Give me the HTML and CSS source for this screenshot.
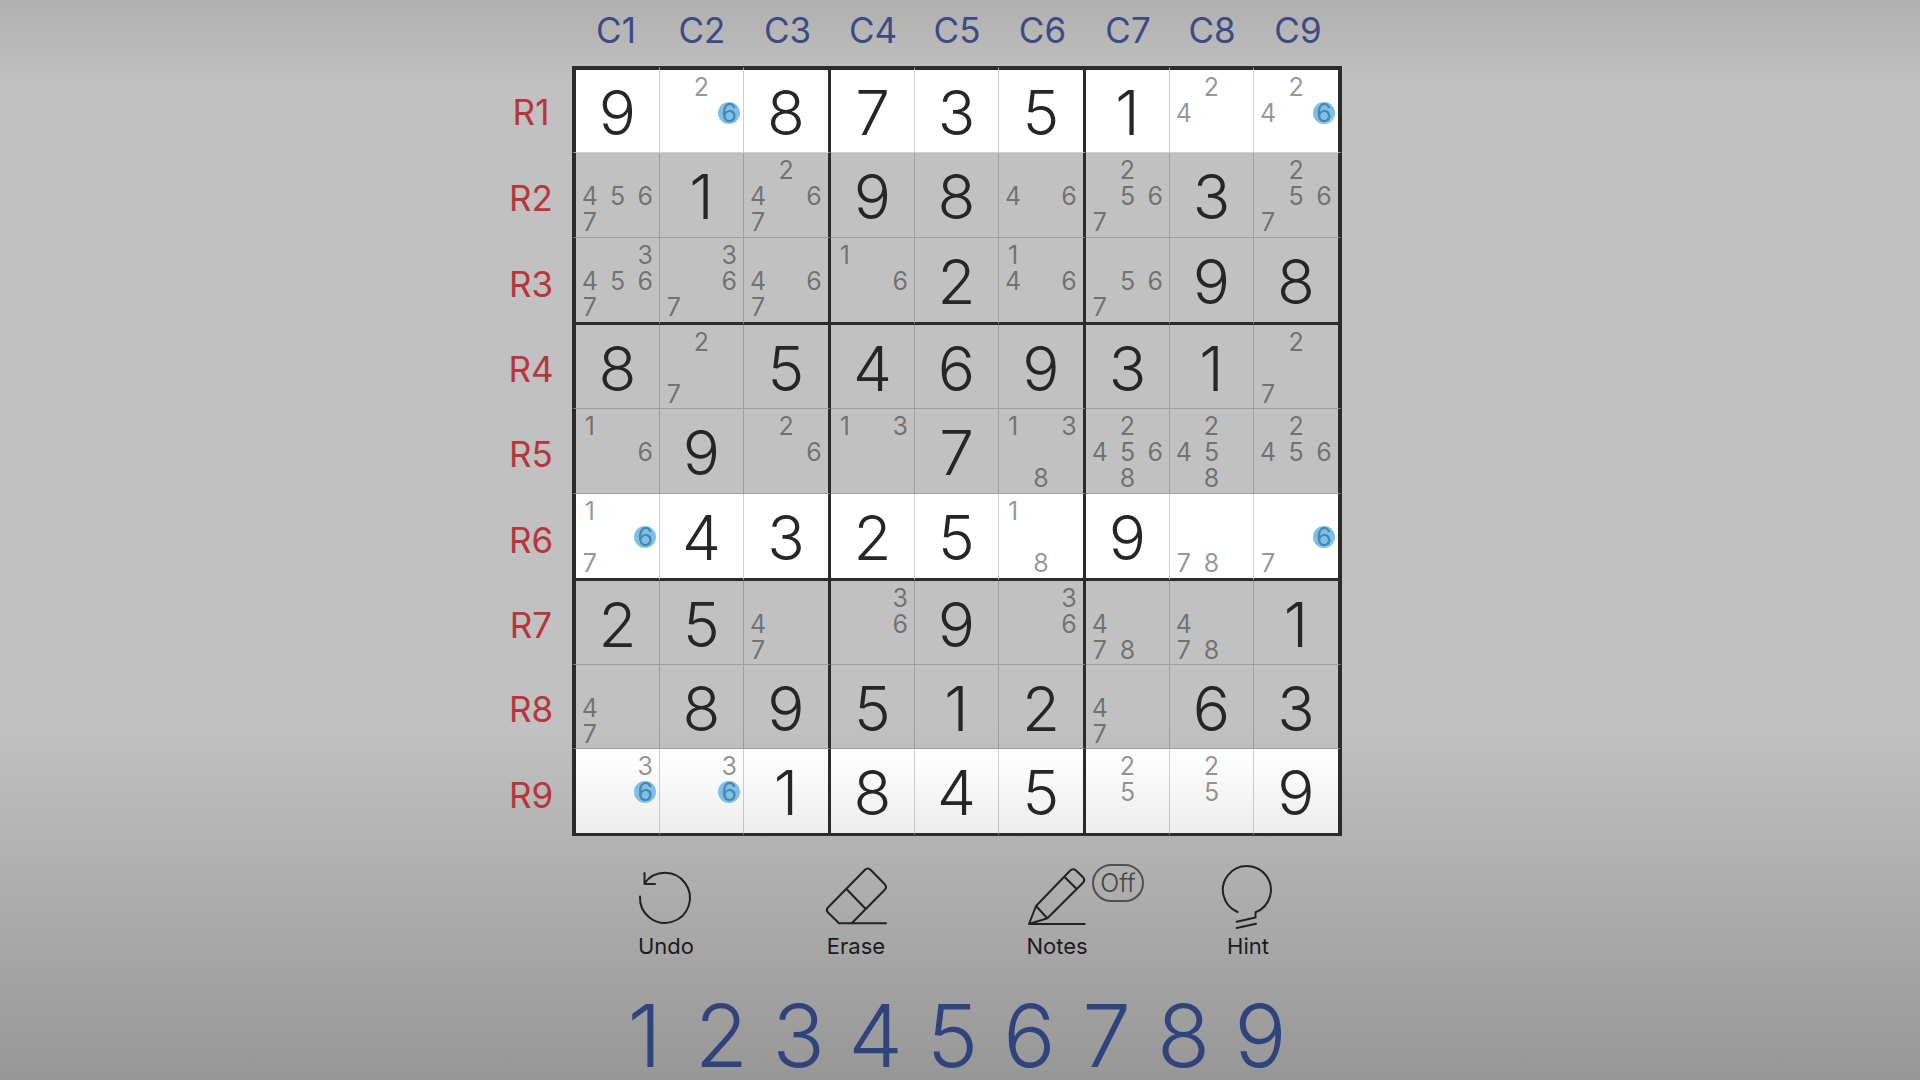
FILE: index.html
```html
<!DOCTYPE html>
<html lang="en">
<head>
<meta charset="utf-8">
<title>Sudoku</title>
<meta name="viewport" content="width=device-width, initial-scale=1">
<link rel="stylesheet" href="styles.css">
</head>
<body>
<main class="game">
<table class="board">
<colgroup><col class="col-label"><col class="col-edge"><col><col class="col-box"><col><col><col class="col-box"><col><col><col class="col-edge"></colgroup>
<thead>
<tr><td class="corner"></td><th scope="col">C1</th><th scope="col">C2</th><th scope="col">C3</th><th scope="col">C4</th><th scope="col">C5</th><th scope="col">C6</th><th scope="col">C7</th><th scope="col">C8</th><th scope="col">C9</th></tr>
</thead>
<tbody>
<tr class="lit first">
<th scope="row">R1</th>
<td>9</td>
<td><div class="notes"><span class="n2">2</span><span class="n6 mark">6</span></div></td>
<td>8</td>
<td>7</td>
<td>3</td>
<td>5</td>
<td>1</td>
<td><div class="notes"><span class="n2">2</span><span class="n4">4</span></div></td>
<td><div class="notes"><span class="n2">2</span><span class="n4">4</span><span class="n6 mark">6</span></div></td>
</tr>
<tr class="tall">
<th scope="row">R2</th>
<td><div class="notes"><span class="n4">4</span><span class="n5">5</span><span class="n6">6</span><span class="n7">7</span></div></td>
<td>1</td>
<td><div class="notes"><span class="n2">2</span><span class="n4">4</span><span class="n6">6</span><span class="n7">7</span></div></td>
<td>9</td>
<td>8</td>
<td><div class="notes"><span class="n4">4</span><span class="n6">6</span></div></td>
<td><div class="notes"><span class="n2">2</span><span class="n5">5</span><span class="n6">6</span><span class="n7">7</span></div></td>
<td>3</td>
<td><div class="notes"><span class="n2">2</span><span class="n5">5</span><span class="n6">6</span><span class="n7">7</span></div></td>
</tr>
<tr class="box-end">
<th scope="row">R3</th>
<td><div class="notes"><span class="n3">3</span><span class="n4">4</span><span class="n5">5</span><span class="n6">6</span><span class="n7">7</span></div></td>
<td><div class="notes"><span class="n3">3</span><span class="n6">6</span><span class="n7">7</span></div></td>
<td><div class="notes"><span class="n4">4</span><span class="n6">6</span><span class="n7">7</span></div></td>
<td><div class="notes"><span class="n1">1</span><span class="n6">6</span></div></td>
<td>2</td>
<td><div class="notes"><span class="n1">1</span><span class="n4">4</span><span class="n6">6</span></div></td>
<td><div class="notes"><span class="n5">5</span><span class="n6">6</span><span class="n7">7</span></div></td>
<td>9</td>
<td>8</td>
</tr>
<tr>
<th scope="row">R4</th>
<td>8</td>
<td><div class="notes"><span class="n2">2</span><span class="n7">7</span></div></td>
<td>5</td>
<td>4</td>
<td>6</td>
<td>9</td>
<td>3</td>
<td>1</td>
<td><div class="notes"><span class="n2">2</span><span class="n7">7</span></div></td>
</tr>
<tr class="tall">
<th scope="row">R5</th>
<td><div class="notes"><span class="n1">1</span><span class="n6">6</span></div></td>
<td>9</td>
<td><div class="notes"><span class="n2">2</span><span class="n6">6</span></div></td>
<td><div class="notes"><span class="n1">1</span><span class="n3">3</span></div></td>
<td>7</td>
<td><div class="notes"><span class="n1">1</span><span class="n3">3</span><span class="n8">8</span></div></td>
<td><div class="notes"><span class="n2">2</span><span class="n4">4</span><span class="n5">5</span><span class="n6">6</span><span class="n8">8</span></div></td>
<td><div class="notes"><span class="n2">2</span><span class="n4">4</span><span class="n5">5</span><span class="n8">8</span></div></td>
<td><div class="notes"><span class="n2">2</span><span class="n4">4</span><span class="n5">5</span><span class="n6">6</span></div></td>
</tr>
<tr class="lit box-end">
<th scope="row">R6</th>
<td><div class="notes"><span class="n1">1</span><span class="n6 mark">6</span><span class="n7">7</span></div></td>
<td>4</td>
<td>3</td>
<td>2</td>
<td>5</td>
<td><div class="notes"><span class="n1">1</span><span class="n8">8</span></div></td>
<td>9</td>
<td><div class="notes"><span class="n7">7</span><span class="n8">8</span></div></td>
<td><div class="notes"><span class="n6 mark">6</span><span class="n7">7</span></div></td>
</tr>
<tr>
<th scope="row">R7</th>
<td>2</td>
<td>5</td>
<td><div class="notes"><span class="n4">4</span><span class="n7">7</span></div></td>
<td><div class="notes"><span class="n3">3</span><span class="n6">6</span></div></td>
<td>9</td>
<td><div class="notes"><span class="n3">3</span><span class="n6">6</span></div></td>
<td><div class="notes"><span class="n4">4</span><span class="n7">7</span><span class="n8">8</span></div></td>
<td><div class="notes"><span class="n4">4</span><span class="n7">7</span><span class="n8">8</span></div></td>
<td>1</td>
</tr>
<tr>
<th scope="row">R8</th>
<td><div class="notes"><span class="n4">4</span><span class="n7">7</span></div></td>
<td>8</td>
<td>9</td>
<td>5</td>
<td>1</td>
<td>2</td>
<td><div class="notes"><span class="n4">4</span><span class="n7">7</span></div></td>
<td>6</td>
<td>3</td>
</tr>
<tr class="lit box-end last">
<th scope="row">R9</th>
<td><div class="notes"><span class="n3">3</span><span class="n6 mark">6</span></div></td>
<td><div class="notes"><span class="n3">3</span><span class="n6 mark">6</span></div></td>
<td>1</td>
<td>8</td>
<td>4</td>
<td>5</td>
<td><div class="notes"><span class="n2">2</span><span class="n5">5</span></div></td>
<td><div class="notes"><span class="n2">2</span><span class="n5">5</span></div></td>
<td>9</td>
</tr>
</tbody>
</table>

<div class="tools">
<button type="button" class="tool">
<svg class="icon" viewBox="0 0 70 70" aria-hidden="true"><path d="M9 32.500A25 25 0 1 0 13.500 19.500M13.500 9V20H24"/></svg>
<span>Undo</span>
</button>
<button type="button" class="tool">
<svg class="icon" viewBox="0 0 70 70" aria-hidden="true"><path d="M44 44.300 25.700 25.300M30.700 59.300 64 25.500Q66 23 64 20.500L49.500 5.800Q46.700 3 44 5.800L7 43.500Q4.500 46 7 48.500L18 59.300H65"/></svg>
<span>Erase</span>
</button>
<button type="button" class="tool">
<svg class="icon" viewBox="0 0 70 70" aria-hidden="true"><path d="M62.700 60H7L25.300 54.300 61 18.700Q63.500 16 61 13.200L54 6.500Q51 4 48 6.700L14 42 7 60M14 42 25.300 54.300M42.300 12.700 54.700 25"/></svg>
<span>Notes</span>
<span class="state">Off</span>
</button>
<button type="button" class="tool">
<svg class="icon" viewBox="0 0 70 70" aria-hidden="true"><path d="M24.500 48A24 24 0 1 1 42.500 48.300V53.500L23.700 57.700M43 59.700 23.700 64"/></svg>
<span>Hint</span>
</button>
</div>

<div class="pad">
<button type="button">1</button>
<button type="button">2</button>
<button type="button">3</button>
<button type="button">4</button>
<button type="button">5</button>
<button type="button">6</button>
<button type="button">7</button>
<button type="button">8</button>
<button type="button">9</button>
</div>
</main>
</body>
</html>
```
FILE: styles.css
```css
* {
  box-sizing: border-box;
}

body {
  margin: 0;
  min-height: 100vh;
  font-family: Inter, "Liberation Sans", sans-serif;
  color: #262626;
  background: linear-gradient(#b0b0b0 0, #c1c1c1 8%, #c1c1c1 67%, #979797 100%);
}

.game {
  max-width: 940px;
  margin: 0 auto;
}

button {
  padding: 0;
  border: 0;
  background: none;
  font-family: inherit;
  cursor: pointer;
}

/* Board */

.board {
  width: 852px;
  table-layout: fixed;
  border-collapse: separate;
  border-spacing: 0;
}

.board col {
  width: 84px;
}

.board .col-label {
  width: 82px;
}

.board .col-edge {
  width: 88px;
}

.board .col-box {
  width: 87px;
}

th {
  padding: 0;
  font-size: 35px;
  font-weight: 400;
  line-height: 40px;
}

thead th {
  height: 66px;
  padding-bottom: 6px;
  color: #3d4a86;
}

tbody th {
  padding-top: 4px;
  color: #b7353b;
}

thead .corner {
  padding: 0;
}

tbody tr {
  height: 84px;
}

tbody .tall {
  height: 85px;
}

tbody .first,
tbody .box-end {
  height: 87px;
}

tbody td {
  padding: 5px 0 0;
  border: 0 solid #2b2b2b;
  border-right: 1px solid rgba(0, 0, 0, 0.18);
  border-bottom: 1px solid rgba(0, 0, 0, 0.18);
  font-size: 62px;
  font-weight: 300;
  line-height: 78px;
  text-align: center;
  vertical-align: top;
}

tbody td:nth-child(2) {
  border-left: 4px solid #2b2b2b;
}

tbody td:nth-child(3n + 4) {
  border-right: 3px solid #2b2b2b;
}

tbody td:nth-child(10) {
  border-right-width: 4px;
}

tbody .first td {
  padding-top: 4px;
  border-top: 4px solid #2b2b2b;
}

tbody .box-end td {
  border-bottom: 3px solid #2b2b2b;
}

.lit td {
  background: #fff;
}

.last td {
  background: linear-gradient(#fff, #ededed);
}

/* Candidates */

.notes {
  display: grid;
  grid-template-columns: repeat(3, 1fr);
  grid-template-rows: repeat(3, 26px);
  place-items: center;
  margin-top: -1px;
  font-size: 25px;
  font-weight: 400;
  line-height: 26px;
  color: rgba(0, 0, 0, 0.43);
}

.first .notes {
  margin-top: 0;
}

.n1 { grid-area: 1 / 1; }
.n2 { grid-area: 1 / 2; }
.n3 { grid-area: 1 / 3; }
.n4 { grid-area: 2 / 1; }
.n5 { grid-area: 2 / 2; }
.n6 { grid-area: 2 / 3; }
.n7 { grid-area: 3 / 1; }
.n8 { grid-area: 3 / 2; }
.n9 { grid-area: 3 / 3; }

.mark {
  width: 22px;
  height: 22px;
  border-radius: 50%;
  line-height: 22px;
  background: #7dc1ea;
  color: #4c86a8;
}

/* Tools */

.tools {
  display: grid;
  grid-template-columns: 190px 190px 212px 170px;
  justify-items: center;
  margin: 28px 0 0 81px;
}

.tool {
  position: relative;
  display: flex;
  flex-direction: column;
  align-items: center;
  font-size: 22px;
  line-height: 24px;
  color: #1c1c1c;
}

.icon {
  width: 70px;
  height: 70px;
  fill: none;
  stroke: #222;
  stroke-width: 2;
  stroke-linecap: round;
  stroke-linejoin: round;
}

.state {
  position: absolute;
  top: 0;
  left: 100%;
  width: 52px;
  height: 38px;
  border: 2px solid #505050;
  border-radius: 19px;
  font-size: 25px;
  font-weight: 300;
  line-height: 34px;
  color: #444;
}

/* Number pad */

.pad {
  display: grid;
  grid-template-columns: repeat(9, 77px);
  margin: 34px 0 0 116px;
}

.pad button {
  font-size: 87px;
  font-weight: 300;
  line-height: 88px;
  color: #31437c;
}
```
